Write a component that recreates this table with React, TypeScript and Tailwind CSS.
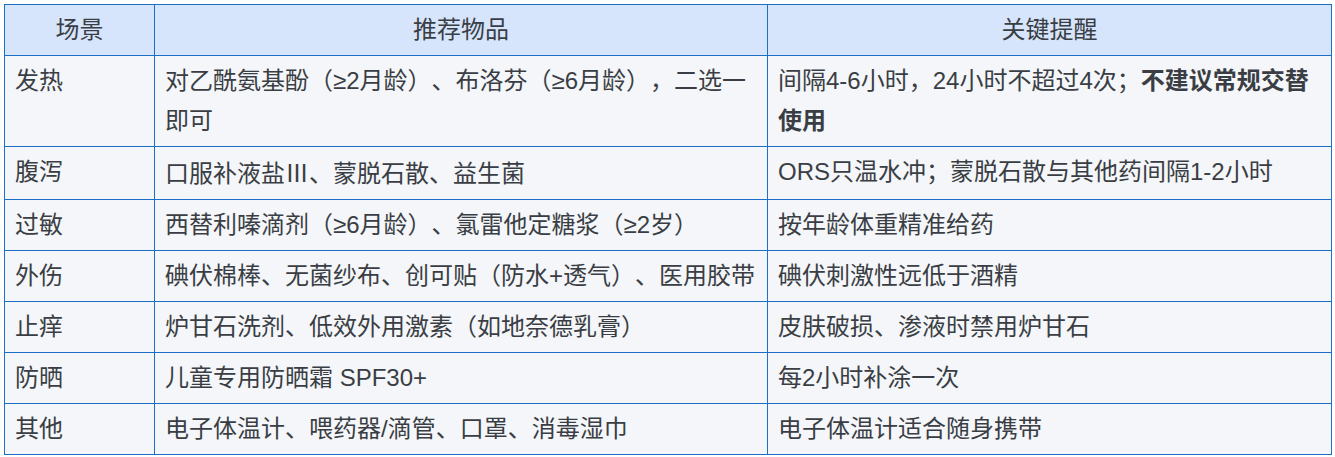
import React from 'react';

type Row = {
    scene: string;
    items: React.ReactNode;
    note: React.ReactNode;
};

const rows: Row[] = [
    {
        scene: '发热',
        items: (
            <>
                对乙酰氨基酚（≥2月龄）、布洛芬（≥6月龄），二选一
                <br />
                即可
            </>
        ),
        note: (
            <>
                间隔4-6小时，24小时不超过4次；
                <strong className="font-bold">
                    不建议常规交替
                    <br />
                    使用
                </strong>
            </>
        ),
    },
    {
        scene: '腹泻',
        items: (
            <>
                口服补液盐<span className="font-['Noto_Sans_CJK_SC',sans-serif]">Ⅲ</span>、蒙脱石散、益生菌
            </>
        ),
        note: 'ORS只温水冲；蒙脱石散与其他药间隔1-2小时',
    },
    { scene: '过敏', items: '西替利嗪滴剂（≥6月龄）、氯雷他定糖浆（≥2岁）', note: '按年龄体重精准给药' },
    { scene: '外伤', items: '碘伏棉棒、无菌纱布、创可贴（防水+透气）、医用胶带', note: '碘伏刺激性远低于酒精' },
    { scene: '止痒', items: '炉甘石洗剂、低效外用激素（如地奈德乳膏）', note: '皮肤破损、渗液时禁用炉甘石' },
    { scene: '防晒', items: '儿童专用防晒霜 SPF30+', note: '每2小时补涂一次' },
    { scene: '其他', items: '电子体温计、喂药器/滴管、口罩、消毒湿巾', note: '电子体温计适合随身携带' },
];

const cell = 'border border-[#1c6fc6] px-[10px] py-[5px] align-top';

const App: React.FC = () => {
    return (
        <div className="min-h-screen bg-white p-[4px] font-['Liberation_Sans','Noto_Sans_CJK_SC',sans-serif] text-[24px] leading-[40px] text-[#3a3e44] [text-spacing-trim:space-all]">
            <table className="w-[1327px] table-fixed border-collapse">
                <colgroup>
                    <col className="w-[150px]" />
                    <col className="w-[613px]" />
                    <col className="w-[564px]" />
                </colgroup>
                <thead>
                    <tr className="bg-[#d6e5fc]">
                        <th className={`${cell} text-center font-normal`}>场景</th>
                        <th className={`${cell} text-center font-normal`}>推荐物品</th>
                        <th className={`${cell} text-center font-normal`}>关键提醒</th>
                    </tr>
                </thead>
                <tbody>
                    {rows.map((r) => (
                        <tr key={r.scene} className="bg-[#f4f6f9]">
                            <td className={`${cell} text-left`}>{r.scene}</td>
                            <td className={`${cell} text-left`}>{r.items}</td>
                            <td className={`${cell} text-left`}>{r.note}</td>
                        </tr>
                    ))}
                </tbody>
            </table>
        </div>
    );
};

export default App;
